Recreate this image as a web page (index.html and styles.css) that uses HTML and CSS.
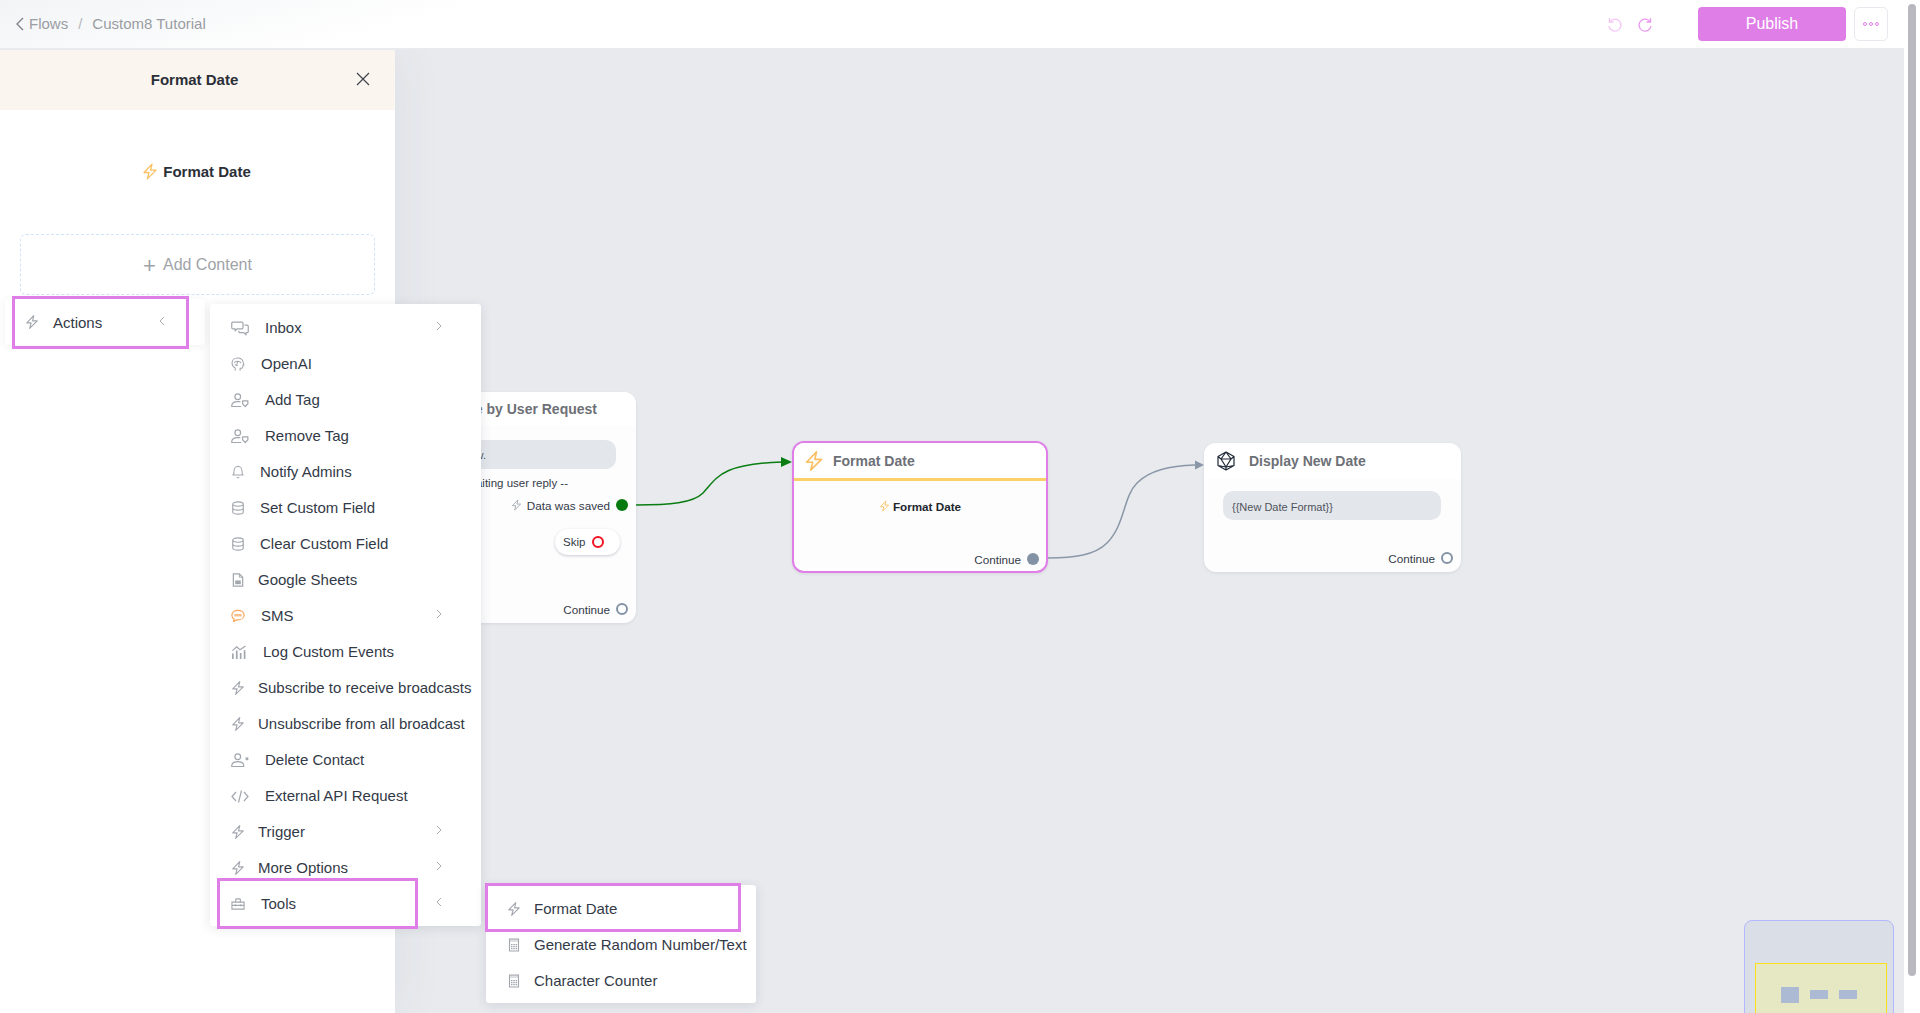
FILE: index.html
```html
<!DOCTYPE html>
<html lang="en">
<head>
<meta charset="utf-8">
<title>Custom8 Tutorial</title>
<link rel="stylesheet" href="styles.css">
</head>
<body>
<svg class="defs" width="0" height="0" aria-hidden="true">
  <symbol id="bolt" viewBox="0 0 24 24"><path d="M15 1 3 13.500h7.500L8 23 21 10h-8z" fill="none" stroke="currentColor" stroke-width="1.900" stroke-linejoin="round"/></symbol>
  <symbol id="chat" viewBox="0 0 24 20"><path d="M2.500 1.500h12a1.500 1.500 0 0 1 1.500 1.500v6a1.500 1.500 0 0 1-1.500 1.500H8l-2.500 2.500v-2.500h-3A1.500 1.500 0 0 1 1 9V3a1.500 1.500 0 0 1 1.500-1.500zM18 5.500h3.500A1.500 1.500 0 0 1 23 7v7a1.500 1.500 0 0 1-1.500 1.500H20v3l-3-3h-5a1.500 1.500 0 0 1-1.500-1.500v-1" fill="none" stroke="currentColor" stroke-width="1.600" stroke-linejoin="round"/></symbol>
  <symbol id="brain" viewBox="0 0 20 20"><path d="M6 19v-3.500C3 14 1.500 11.500 1.500 8.500 1.500 4.500 5 1.500 9.500 1.500s8 3 8 6.500l1 3.500h-1.500V14c0 1.500-1 2-2 2h-2v3M5 8c1-2.500 7-3 9 0M9.500 7l-1 3.500M6 11c1 1 2 1.200 3 1" fill="none" stroke="currentColor" stroke-width="1.500" stroke-linecap="round" stroke-linejoin="round"/></symbol>
  <symbol id="usertag" viewBox="0 0 24 20"><circle cx="9" cy="5" r="3.800" fill="none" stroke="currentColor" stroke-width="1.600"/><path d="M1 18v-1c0-3.500 3.500-5.500 8-5.500h3M1 18h12" fill="none" stroke="currentColor" stroke-width="1.600" stroke-linecap="round"/><path d="M15.500 10.500h7v4l-3.500 3.500-3.500-3.500z" fill="none" stroke="currentColor" stroke-width="1.600" stroke-linejoin="round"/></symbol>
  <symbol id="userx" viewBox="0 0 24 20"><circle cx="9" cy="5" r="3.800" fill="none" stroke="currentColor" stroke-width="1.600"/><path d="M1 18v-1c0-3.500 3.500-5.500 8-5.500s8 2 8 5.500v1z" fill="none" stroke="currentColor" stroke-width="1.600" stroke-linejoin="round"/><path d="m19.500 6 3.500 3.500m0-3.500-3.500 3.500" stroke="currentColor" stroke-width="1.600"/></symbol>
  <symbol id="bell" viewBox="0 0 16 18"><path d="M1.500 13c1.500-1.500 1.500-3 1.500-6a5 5 0 0 1 10 0c0 3 0 4.500 1.500 6zM6.500 15.500a1.600 1.600 0 0 0 3 0M8 1v1" fill="none" stroke="currentColor" stroke-width="1.300" stroke-linejoin="round"/></symbol>
  <symbol id="db" viewBox="0 0 14 16"><path d="M1 3.500C1 2 3.500 1 7 1s6 1 6 2.500v9C13 14 10.500 15 7 15s-6-1-6-2.500zM1 3.500C1 5 3.500 6 7 6s6-1 6-2.500M1 8c0 1.500 2.500 2.500 6 2.500S13 9.500 13 8" fill="none" stroke="currentColor" stroke-width="1.300"/></symbol>
  <symbol id="sheet" viewBox="0 0 12 15"><path d="M1 1h6.500L11 4.500V14H1z" fill="none" stroke="currentColor" stroke-width="1.300"/><path d="M7.500 1v3.500H11" fill="none" stroke="currentColor"/><path d="M3 8h6v4H3z" fill="currentColor"/></symbol>
  <symbol id="sms" viewBox="0 0 16 15"><path d="M8 1c4 0 7 2.300 7 5.500S12 12 8 12H6l-3 2 .5-3C2 10 1 8.500 1 6.500 1 3.300 4 1 8 1z" fill="none" stroke="currentColor" stroke-width="1.300" stroke-linejoin="round"/><path d="M3.800 5.200h8.400v2.800H3.800z" fill="currentColor" opacity=".7"/></symbol>
  <symbol id="chart" viewBox="0 0 17 15"><path d="M1.500 6 6 2l3.500 3L15.500 1" fill="none" stroke="currentColor" stroke-width="1.300"/><path d="M1 9h1.800v6H1zM5.200 6h1.800v9H5.200zM9.400 8.500h1.800V15H9.400zM13.600 5.500h1.800V15h-1.800z" fill="currentColor"/></symbol>
  <symbol id="code" viewBox="0 0 18 14"><path d="M5 2.500 1 7l4 4.500M13 2.500 17 7l-4 4.500M10.500 1l-3 12" fill="none" stroke="currentColor" stroke-width="1.200"/></symbol>
  <symbol id="toolbox" viewBox="0 0 15 13"><path d="M1 4.500h13V12H1zM5 4.500V2c0-.6.400-1 1-1h3c.6 0 1 .4 1 1v2.500M1 8h13" fill="none" stroke="currentColor" stroke-width="1.200"/><path d="M4 7h1.400v2H4zM9.600 7H11v2H9.600z" fill="currentColor"/></symbol>
  <symbol id="calc" viewBox="0 0 11 14"><path d="M1 1h9v12H1z" fill="none" stroke="currentColor" stroke-width="1.100"/><path d="M1 1h9v3H1z" fill="currentColor" opacity=".35"/><path d="M2.500 6h1.500v1.300H2.500zM4.800 6h1.500v1.300H4.800zM7.100 6h1.500v1.300H7.100zM2.500 8h1.500v1.300H2.500zM4.800 8h1.500v1.300H4.800zM7.100 8h1.500v1.300H7.100zM2.500 10h1.500v1.300H2.500zM4.800 10h1.500v1.300H4.800zM7.100 10h1.500v1.300H7.100z" fill="currentColor"/></symbol>
  <symbol id="chev-r" viewBox="0 0 6 10"><path d="m1 1 4 4-4 4" fill="none" stroke="currentColor" stroke-width="1"/></symbol>
  <symbol id="chev-l" viewBox="0 0 6 10"><path d="M5 1 1 5l4 4" fill="none" stroke="currentColor" stroke-width="1"/></symbol>
</svg>

<div class="app">
  <div class="page">
    <header class="topbar">
      <nav class="crumbs">
        <svg class="back" viewBox="0 0 8 14"><path d="M7 1 1 7l6 6" fill="none" stroke="currentColor" stroke-width="1.400"/></svg>
        <span>Flows</span><span class="slash">/</span><span>Custom8 Tutorial</span>
      </nav>
      <div class="top-actions">
        <svg class="hist hist-off" viewBox="0 0 16 16"><path d="M3.500 2v4h4M3.800 6A6 6 0 1 1 3 10" fill="none" stroke="currentColor" stroke-width="1.300"/></svg>
        <svg class="hist" viewBox="0 0 16 16"><path d="M12.500 2v4h-4M12.200 6A6 6 0 1 0 13 10" fill="none" stroke="currentColor" stroke-width="1.300"/></svg>
        <button class="publish">Publish</button>
        <button class="more"><i></i><i></i><i></i></button>
      </div>
    </header>
    <div class="workspace">
      <aside class="sidebar">
        <div class="panel-head">
          <span>Format Date</span>
          <svg class="close" viewBox="0 0 14 14"><path d="m1 1 12 12M13 1 1 13" stroke="currentColor" stroke-width="1.200"/></svg>
        </div>
        <div class="panel-title"><svg class="i-bolt i-panel orange"><use href="#bolt"/></svg><b>Format Date</b></div>
        <div class="add-content"><span class="plus">+</span>Add Content</div>
        <div class="actions-card">
          <svg class="i-bolt"><use href="#bolt"/></svg>
          <span>Actions</span>
          <svg class="chev"><use href="#chev-l"/></svg>
        </div>
      </aside>
      <main class="canvas">
        <svg class="edges" viewBox="0 0 1509 963" width="1509" height="963">
          <path d="M241 455C275 455 298 453 308 443 322 428 325 414 387 412" fill="none" stroke="#0a7d12" stroke-width="1.500"/>
          <path d="M386 407 397 412 386 417z" fill="#0a7d12"/>
          <path d="M653 508C680 508 700 505 712 493 730 475 728 447 742 433 755 420 775 416 800 415" fill="none" stroke="#8b97a8" stroke-width="1.500"/>
          <path d="M800 410.500 809 415 800 419.500z" fill="#8b97a8"/>
        </svg>

        <section class="node node-a">
          <h3 class="node-title node-title-right">Validate Date by User Request</h3>
          <div class="pill pill-a">Enter date below.</div>
          <p class="waiting">-- Waiting user reply --</p>
          <div class="port port-saved"><svg class="i-bolt tiny"><use href="#bolt"/></svg><span>Data was saved</span><i class="dot dot-green"></i></div>
          <div class="skip"><span>Skip</span><i class="ring ring-red"></i></div>
          <div class="port port-end"><span>Continue</span><i class="dot dot-ring"></i></div>
        </section>

        <section class="node node-b">
          <h3 class="node-title title-line"><svg class="i-title orange"><use href="#bolt"/></svg>Format Date</h3>
          <div class="step"><svg class="i-bolt tiny orange"><use href="#bolt"/></svg><b>Format Date</b></div>
          <div class="port port-end"><span>Continue</span><i class="dot dot-grey"></i></div>
        </section>

        <section class="node node-c">
          <h3 class="node-title title-c">
            <svg class="i-title" viewBox="0 0 20 20"><path d="M10 1 18 5.500v9L10 19l-8-4.500v-9zM10 1 5 8h10zM5 8l5 8 5-8M2 5.500 5 8M18 5.500 15 8M2 14.500 10 16l8-1.500M10 16v3" fill="none" stroke="#1f2937" stroke-width="1.200" stroke-linejoin="round"/></svg>
            Display New Date</h3>
          <div class="pill pill-c">{{New Date Format}}</div>
          <div class="port port-end"><span>Continue</span><i class="dot dot-ring"></i></div>
        </section>

        <div class="minimap">
          <div class="viewport"><i class="mm mm-1"></i><i class="mm mm-2"></i><i class="mm mm-3"></i></div>
        </div>
      </main>

      <div class="hl hl-actions"></div>

      <ul class="menu main-menu">
        <li><svg class="ic w18"><use href="#chat"/></svg><span class="tx t34">Inbox</span><svg class="chev"><use href="#chev-r"/></svg></li>
        <li><svg class="ic w14"><use href="#brain"/></svg><span class="tx t30">OpenAI</span></li>
        <li><svg class="ic w18"><use href="#usertag"/></svg><span class="tx t34">Add Tag</span></li>
        <li><svg class="ic w18"><use href="#usertag"/></svg><span class="tx t34">Remove Tag</span></li>
        <li><svg class="ic w14"><use href="#bell"/></svg><span class="tx t29">Notify Admins</span></li>
        <li><svg class="ic w14"><use href="#db"/></svg><span class="tx t29">Set Custom Field</span></li>
        <li><svg class="ic w14"><use href="#db"/></svg><span class="tx t29">Clear Custom Field</span></li>
        <li><svg class="ic w12"><use href="#sheet"/></svg><span class="tx t27">Google Sheets</span></li>
        <li><svg class="ic w14 orange"><use href="#sms"/></svg><span class="tx t30">SMS</span><svg class="chev"><use href="#chev-r"/></svg></li>
        <li><svg class="ic w16"><use href="#chart"/></svg><span class="tx t32">Log Custom Events</span></li>
        <li><svg class="ic w14"><use href="#bolt"/></svg><span class="tx t27">Subscribe to receive broadcasts</span></li>
        <li><svg class="ic w14"><use href="#bolt"/></svg><span class="tx t27">Unsubscribe from all broadcast</span></li>
        <li><svg class="ic w18"><use href="#userx"/></svg><span class="tx t34">Delete Contact</span></li>
        <li><svg class="ic w18"><use href="#code"/></svg><span class="tx t34">External API Request</span></li>
        <li><svg class="ic w14"><use href="#bolt"/></svg><span class="tx t27">Trigger</span><svg class="chev"><use href="#chev-r"/></svg></li>
        <li><svg class="ic w14"><use href="#bolt"/></svg><span class="tx t27">More Options</span><svg class="chev"><use href="#chev-r"/></svg></li>
        <li><svg class="ic w14"><use href="#toolbox"/></svg><span class="tx t30">Tools</span><svg class="chev"><use href="#chev-l"/></svg></li>
      </ul>
      <div class="hl hl-tools"></div>

      <ul class="menu sub-menu">
        <li><svg class="ic w14"><use href="#bolt"/></svg><span class="tx sub-tx">Format Date</span></li>
        <li><svg class="ic w12"><use href="#calc"/></svg><span class="tx sub-tx">Generate Random Number/Text</span></li>
        <li><svg class="ic w12"><use href="#calc"/></svg><span class="tx sub-tx">Character Counter</span></li>
      </ul>
      <div class="hl hl-format"></div>
    </div>
  </div>
  <div class="scroll-gutter"><div class="scroll-thumb"></div></div>
</div>
</body>
</html>
```

FILE: styles.css
```css
* { box-sizing: border-box; }
html, body { margin: 0; height: 100%; overflow: hidden; }
body { font-family: "Liberation Sans", Arial, sans-serif; background: #fff; color: #333a47; }
.defs { position: absolute; }
h3, p, ul { margin: 0; padding: 0; }
button { font-family: inherit; cursor: pointer; }

.app { display: flex; height: 1013px; }
.page { width: 1904px; display: flex; flex-direction: column; }
.scroll-gutter { width: 16px; padding: 4px 4px 0; background: #fff; }
.scroll-thumb { width: 8px; height: 972px; border-radius: 4px; background: #b9b8bf; }

.topbar { height: 50px; flex: none; display: flex; align-items: center; justify-content: space-between; border-bottom: 2px solid #e8eaee; background: linear-gradient(165deg, #f2f4f6 0, #fff 24%); padding: 0 16px; }
.crumbs { display: flex; align-items: center; font-size: 15px; color: #9a9da3; padding-bottom: 1px; }
.back { width: 8px; height: 14px; margin-right: 5px; color: #80848b; }
.slash { margin: 0 10px; color: #b5b8bd; }
.top-actions { display: flex; align-items: center; }
.hist { width: 16px; height: 16px; color: #e999ef; margin-right: 16px; margin-bottom: 1px; }
.hist-off { color: #f4c5f6; margin-right: 16px; }
.publish { width: 148px; height: 34px; margin-left: 28px; border: 0; border-radius: 4px; background: #e07ee8; color: #fff; font-size: 16px; }
.more { width: 34px; height: 34px; margin-left: 8px; padding: 0; display: flex; align-items: center; justify-content: center; gap: 2px; background: #fff; border: 1px solid #e8e8ee; border-radius: 5px; }
.more i { width: 4px; height: 4px; border-radius: 50%; border: 1px solid #e07ee8; }

.workspace { flex: 1; display: flex; position: relative; overflow: hidden; }
.sidebar { width: 395px; flex: none; background: #fff; position: relative; z-index: 2; box-shadow: 0 0 50px rgba(60, 70, 90, .07); }
.panel-head { height: 60px; background: #faf5ef; display: flex; align-items: center; justify-content: center; font-size: 15px; font-weight: 700; color: #2b2f38; position: relative; padding: 0 6px 1px 0; }
.close { position: absolute; right: 25px; top: 22px; width: 14px; height: 14px; color: #3f434b; }
.panel-title { height: 124px; padding: 0 2px 2px 0; display: flex; align-items: center; justify-content: center; gap: 5px; font-size: 15px; color: #2b2f38; }
.i-bolt { width: 14px; height: 16px; color: #a2a6ad; flex: none; }
.i-panel { width: 16px; height: 17px; }
.add-content { margin: 0 20px; height: 61px; border: 1px dashed #cfe3fb; border-radius: 6px; display: flex; align-items: center; justify-content: center; font-size: 16px; color: #a0a3a8; }
.plus { font-size: 22px; font-weight: 300; margin-right: 7px; line-height: 1; padding-top: 2px; }
.actions-card { width: 200px; height: 46px; margin: 4px 0 0 5px; background: #fff; border-radius: 3px; box-shadow: 0 1px 8px rgba(40, 50, 70, .07); display: flex; align-items: center; padding-left: 20px; font-size: 15px; position: relative; }
.actions-card span { margin-left: 14px; }
.actions-card .chev { position: absolute; left: 154px; top: 17px; }
.chev { width: 6px; height: 10px; color: #a7abb2; flex: none; }

.hl { position: absolute; border: 3px solid #e07ee8; z-index: 6; pointer-events: none; }
.hl-actions { left: 12px; top: 246px; width: 177px; height: 53px; }
.hl-tools { left: 217px; top: 828px; width: 201px; height: 51px; }
.hl-format { left: 485px; top: 833px; width: 256px; height: 49px; }

.menu { position: absolute; list-style: none; background: #fff; border-radius: 3px; box-shadow: 0 2px 12px rgba(40, 50, 70, .12); z-index: 4; font-size: 15px; }
.menu li { height: 36px; display: flex; align-items: center; padding-left: 21px; position: relative; white-space: nowrap; }
.main-menu { left: 210px; top: 254px; width: 271px; height: 622px; padding-top: 6px; }
.main-menu .chev { position: absolute; left: 226px; top: 11px; }
.sub-menu { left: 486px; top: 835px; width: 270px; height: 118px; padding-top: 6px; }
.ic { height: 14px; color: #a2a6ad; flex: none; }
.ic.orange { color: #f9a45a; }
.w12 { width: 12px; margin-left: 1px; }
.w14 { width: 14px; }
.w16 { width: 16px; }
.w18 { width: 18px; height: 15px; }
.tx { position: absolute; top: 10px; line-height: 16px; }
.t27 { left: 48px; }
.t29 { left: 50px; }
.t30 { left: 51px; }
.t32 { left: 53px; }
.t34 { left: 55px; }
.sub-tx { left: 48px; }

.canvas { flex: 1; position: relative; overflow: hidden; background: #e8eaee; }
.edges { position: absolute; left: 0; top: 0; z-index: 2; }
.orange { color: #fbbf62; }

.node { position: absolute; width: 256px; background: #fdfdfe; border-radius: 12px; box-shadow: 0 1px 3px rgba(40, 50, 70, .1); display: flex; flex-direction: column; font-size: 11.700px; color: #333a47; z-index: 1; }
.node-a { left: -15px; top: 342px; height: 231px; }
.node-b { left: 397px; top: 391px; height: 132px; border: 2px solid #e07ee8; }
.node-c { left: 809px; top: 393px; width: 257px; height: 129px; }
.node-title { height: 36px; flex: none; display: flex; align-items: center; gap: 10px; padding-left: 12px; font-size: 14px; font-weight: 700; color: #6d7076; background: #fff; border-radius: 12px 12px 0 0; }
.node-title-right { justify-content: flex-end; padding-right: 39px; height: 34px; margin-bottom: 1px; }
.title-line { height: 38px; border-bottom: 3px solid #fbd069; padding-left: 10px; gap: 9px; border-radius: 10px 10px 0 0; }
.title-c { gap: 13px; }
.i-title { width: 20px; height: 22px; flex: none; }
.pill { background: #e3e6eb; border-radius: 10px; height: 29px; font-size: 11px; display: flex; align-items: center; color: #4f535b; white-space: nowrap; padding-top: 1px; }
.pill-a { margin: 13px 20px 0 20px; justify-content: flex-end; padding-right: 130px; }
.pill-c { margin: 12px 20px 0 19px; padding: 2px 0 0 9px; }
.waiting { margin-top: 8px; padding-right: 68px; text-align: right; font-size: 11.500px; white-space: nowrap; }
.port { display: flex; align-items: center; justify-content: flex-end; gap: 6px; padding-right: 8px; height: 14px; white-space: nowrap; }
.port-saved { margin-top: 9px; }
.tiny { width: 11px; height: 14px; }
.port-saved .tiny { margin-right: -1px; }
.port-end { margin-top: auto; margin-bottom: 7px; }
.node-b .port-end { margin-bottom: 5px; padding-right: 7px; }
.dot { width: 12px; height: 12px; border-radius: 50%; flex: none; }
.dot-green { background: #077a0f; }
.dot-grey { background: #8492a6; }
.dot-ring { border: 2px solid #8492a6; background: #fff; }
.skip { align-self: flex-end; margin: 17px 16px 0 0; width: 65px; height: 26px; background: #fff; border-radius: 13px; box-shadow: 0 1px 3px rgba(40, 50, 70, .25); display: flex; align-items: center; padding-left: 8px; gap: 7px; font-size: 11.500px; }
.ring { width: 12px; height: 12px; border-radius: 50%; border: 2px solid #f0121e; }
.step { margin-top: 18px; display: flex; justify-content: center; align-items: center; gap: 3px; font-size: 11.700px; color: #23262d; }

.minimap { position: absolute; left: 1349px; top: 870px; width: 150px; height: 120px; border: 1px solid #b3b7ff; border-radius: 8px; background: #dadee6; }
.viewport { position: absolute; left: 10px; top: 42px; width: 132px; height: 70px; background: #e6e8c4; border: 1px solid #f9e019; }
.mm { position: absolute; background: #adbad3; }
.mm-1 { left: 25px; top: 23px; width: 18px; height: 16px; }
.mm-2 { left: 54px; top: 26px; width: 18px; height: 9px; }
.mm-3 { left: 83px; top: 26px; width: 18px; height: 9px; }
```
